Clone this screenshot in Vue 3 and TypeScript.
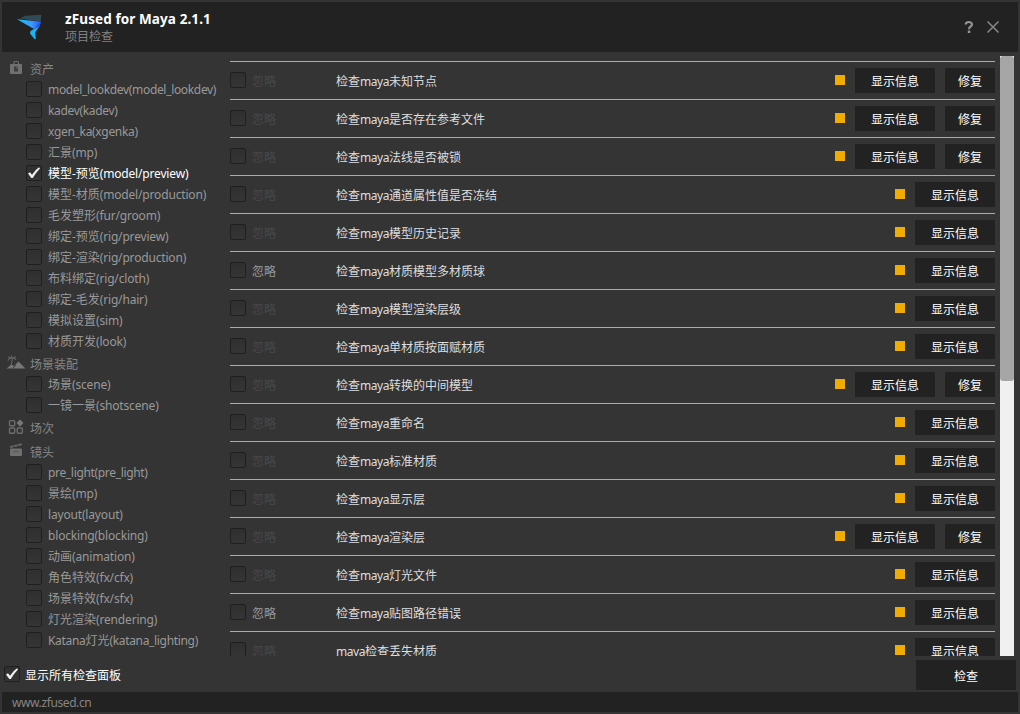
<script setup lang="ts">
interface Entry { label: string; checked?: boolean }
interface Group { name: string; icon: 'asset' | 'assembly' | 'sequence' | 'shot'; entries: Entry[] }
interface Check { label: string; repair?: boolean; ignorable?: boolean }

const list = (...labels: string[]): Entry[] => labels.map((label) => ({ label }))

// Splits a label into runs of Latin and Chinese text so each can be tracked separately.
const runs = (label: string) =>
  (label.match(/[\x20-\x7e]+|[^\x20-\x7e]+/g) ?? []).map((text) => ({
    text,
    kind: /[^\x20-\x7e]/.test(text) ? 'han' : /_|ka/i.test(text) ? 'latin tight' : 'latin',
  }))

const groups: Group[] = [
  {
    name: '资产',
    icon: 'asset',
    entries: [
      ...list('model_lookdev(model_lookdev)', 'kadev(kadev)', 'xgen_ka(xgenka)', '汇景(mp)'),
      { label: '模型-预览(model/preview)', checked: true },
      ...list('模型-材质(model/production)', '毛发塑形(fur/groom)', '绑定-预览(rig/preview)', '绑定-渲染(rig/production)',
        '布料绑定(rig/cloth)', '绑定-毛发(rig/hair)', '模拟设置(sim)', '材质开发(look)'),
    ],
  },
  { name: '场景装配', icon: 'assembly', entries: list('场景(scene)', '一镜一景(shotscene)') },
  { name: '场次', icon: 'sequence', entries: [] },
  {
    name: '镜头',
    icon: 'shot',
    entries: list('pre_light(pre_light)', '景绘(mp)', 'layout(layout)', 'blocking(blocking)', '动画(animation)',
      '角色特效(fx/cfx)', '场景特效(fx/sfx)', '灯光渲染(rendering)', 'Katana灯光(katana_lighting)'),
  },
]

const checks: Check[] = [
  { label: '检查maya未知节点', repair: true },
  { label: '检查maya是否存在参考文件', repair: true },
  { label: '检查maya法线是否被锁', repair: true },
  { label: '检查maya通道属性值是否冻结' },
  { label: '检查maya模型历史记录' },
  { label: '检查maya材质模型多材质球', ignorable: true },
  { label: '检查maya模型渲染层级' },
  { label: '检查maya单材质按面赋材质' },
  { label: '检查maya转换的中间模型', repair: true },
  { label: '检查maya重命名' },
  { label: '检查maya标准材质' },
  { label: '检查maya显示层' },
  { label: '检查maya渲染层', repair: true },
  { label: '检查maya灯光文件' },
  { label: '检查maya贴图路径错误', ignorable: true },
  { label: 'maya检查丢失材质' },
]
</script>

<template>
  <div class="window">
    <header class="titlebar">
      <svg class="logo" viewBox="0 0 28 28" width="28" height="28">
        <defs>
          <linearGradient id="wing" x1="0" y1="0" x2="1" y2="0">
            <stop offset="0" stop-color="#12c4f5" />
            <stop offset="0.6" stop-color="#3a9bff" />
            <stop offset="1" stop-color="#2a55f0" />
          </linearGradient>
        </defs>
        <path d="M3 5.500 8 2.800 24.500 1.800 23.500 8.800Z" fill="#304b56" />
        <path d="M0 6.300 24 8.800 22.500 13.500 17 16Z" fill="url(#wing)" />
        <path d="M13.500 18 22.500 13 18 19.500 18.800 26 17.500 26 13 20.500Z" fill="#17b7f7" />
        <path d="M17 16 24 8.800 22.500 13.200Z" fill="#2250dc" />
      </svg>
      <div class="titles">
        <h1>zFused for Maya 2.1.1</h1>
        <p>项目检查</p>
      </div>
      <div class="controls">
        <svg width="10" height="14" viewBox="0 0 10 14">
          <path d="M1.700 4.600C1.700 1.200 8 1.200 8 4.400 8 6.600 5 6.400 5 9.200" fill="none" stroke="#939393" stroke-width="2.200" />
          <rect x="3.800" y="10.500" width="2.500" height="2.500" fill="#939393" />
        </svg>
        <svg width="14" height="14" viewBox="0 0 14 14">
          <path d="M1.500 1.500 12.500 12.500M12.500 1.500 1.500 12.500" stroke="#888" stroke-width="1.500" />
        </svg>
      </div>
    </header>

    <main class="body">
      <nav class="sidebar">
        <section v-for="g in groups" :key="g.name" :class="['group', g.icon]">
          <div class="group-head">
            <svg class="group-icon" width="20" height="18" viewBox="0 0 20 18">
              <g v-if="g.icon === 'asset'">
                <path d="M8 5V3.500Q8 2.500 9 2.500h2.500q1 0 1 1V5" fill="none" stroke="#6b6b6b" stroke-width="1.200" />
                <rect x="4" y="5" width="12" height="10" rx="1" fill="#707070" />
                <rect x="8" y="7.500" width="4" height="5" fill="#3e3e3e" />
                <path d="M10 7.500h2v2h-2z" fill="#595959" />
              </g>
              <g v-else-if="g.icon === 'assembly'">
                <path d="M0.500 15.500 5.500 11.500 8 13 12.500 8.500 19.500 15.500Z" fill="#777" />
                <path d="M5.200 12 6.500 5.500M2 7.500Q4 4 6.500 5.500 8.500 4 10 7M2 4 6.500 5.500M5 2.500 6.500 5.500 9.500 3.500" fill="none" stroke="#666" stroke-width="1.100" />
                <path d="M6.500 15.500 9.800 12" stroke="#3a3a3a" />
              </g>
              <g v-else-if="g.icon === 'sequence'" fill="none" stroke="#6c6c6c" stroke-width="1.400">
                <rect x="3.500" y="2.600" width="5.200" height="5.200" rx="1" />
                <rect x="3.500" y="10" width="5.200" height="5.200" rx="1" />
                <rect x="11.200" y="10" width="5.200" height="5.200" rx="1" />
                <path d="M14 1.500 17.500 5 14 8.500 10.500 5Z" fill="#777" stroke="none" />
              </g>
              <g v-else>
                <path d="M3.800 5.200 15.500 2.200 16 4.300 4.300 7Z" fill="#666" />
                <path d="M7 4.300 8.500 6M11 3.300 12.500 5" stroke="#3e3e3e" />
                <rect x="4" y="7.500" width="12" height="7.500" rx="1" fill="#707070" />
                <path d="M7.500 10.500h5" stroke="#5c5c5c" stroke-width="1.500" />
              </g>
            </svg>
            <span class="group-name">{{ g.name }}</span>
          </div>
          <label v-for="e in g.entries" :key="e.label" :class="['entry', { on: e.checked }]">
            <span class="box">
              <svg v-if="e.checked" width="14" height="14" viewBox="0 0 14 14"><path d="M1 7.500 3 6.300 5 8.800Q8 4 12 1.300L13 2.400Q8.500 7 5.800 12H4.300Z" fill="#f0f0f0" /></svg>
            </span>
            <span><span v-for="(r, i) in runs(e.label)" :key="i" :class="r.kind">{{ r.text }}</span></span>
          </label>
        </section>
      </nav>

      <div class="checks">
        <div v-for="c in checks" :key="c.label" class="check">
          <span class="box"></span>
          <span :class="['ignore', { active: c.ignorable }]">忽略</span>
          <span class="name"><span v-for="(r, i) in runs(c.label)" :key="i" :class="r.kind">{{ r.text }}</span></span>
          <i class="status"></i>
          <button class="info">显示信息</button>
          <button v-if="c.repair" class="repair">修复</button>
        </div>
      </div>
      <div class="scrollbar"><div class="thumb"></div></div>
    </main>

    <div class="actions">
      <label class="show-all">
        <span class="box">
          <svg width="14" height="14" viewBox="0 0 14 14"><path d="M1 7.500 3 6.300 5 8.800Q8 4 12 1.300L13 2.400Q8.500 7 5.800 12H4.300Z" fill="#f0f0f0" /></svg>
        </span>
        <span class="show-all-text">显示所有检查面板</span>
      </label>
      <button class="run">检查</button>
    </div>
    <footer class="footer">www.zfused.cn</footer>
  </div>
</template>

<style>
body { margin: 0; background: #343434; }
</style>

<style scoped>
* { box-sizing: border-box; }
.window {
  width: 1020px;
  height: 714px;
  padding: 2px;
  display: flex;
  flex-direction: column;
  overflow: hidden;
  background: #343434;
  color: #999;
  font: 12px/16px "Noto Sans", "Noto Sans CJK SC", sans-serif;
  white-space: nowrap;
}
.latin { letter-spacing: -0.17px; }
.tight { letter-spacing: -0.33px; }
.name .latin { letter-spacing: -0.45px; }
.titlebar {
  height: 50px;
  flex: none;
  display: flex;
  align-items: center;
  padding: 0 18px 0 15px;
  background: #222;
}
.titles { margin-left: 20px; padding-top: 2px; flex: 1; }
h1 { margin: 0; font-size: 13.5px; line-height: 17px; font-weight: 700; letter-spacing: 0.1px; color: #fff; }
p { margin: 0; padding-top: 1px; line-height: 16px; color: #808080; }
.controls { display: flex; gap: 12px; }
.body {
  height: 604px;
  flex: none;
  display: flex;
}
.sidebar { width: 228px; padding-top: 5px; flex: none; }
.group-head { height: 22px; display: flex; align-items: center; padding-left: 4px; color: #858585; }
.group-icon { margin-right: 4px; }
.group-name { padding-top: 4px; }
.assembly .group-icon { margin-bottom: 2px; }
.sequence .group-head { height: 24px; }
.sequence .group-name { padding-top: 2px; }
.sequence .group-icon, .shot .group-icon { margin-bottom: 2px; }
.entry { height: 21px; display: flex; align-items: center; padding-left: 24px; gap: 6px; }
.entry.on { color: #fff; }
.box {
  width: 16px;
  height: 16px;
  flex: none;
  display: flex;
  margin-bottom: 2px;
  border: 1px solid #1f1f1f;
  border-radius: 2px;
  background: linear-gradient(#2f2f2f, #353535);
}
.checks { width: 765px; height: 604px; padding-top: 9px; overflow: hidden; }
.check {
  height: 38px;
  display: flex;
  align-items: center;
  border-top: 1px solid #eaaa0a;
}
.ignore { width: 84px; margin-left: 6px; padding-top: 2px; color: #484848; }
.ignore.active { color: #999; }
.name { flex: 1; padding-top: 2px; color: #dedede; }
.status { width: 10px; height: 10px; margin-bottom: 2px; background: #f0ac00; }
button {
  height: 25px;
  margin: 0 0 0 10px;
  padding: 3px 0 0;
  border: 0;
  background: #222;
  color: #fff;
  font: inherit;
}
.info { width: 80px; }
.repair { width: 50px; }
.scrollbar { width: 14px; height: 600px; margin: 4px 0 0 5px; background: #f0f0f0; }
.thumb { height: 325px; border-radius: 3px; background: #a6a6a6; }
.actions { height: 36px; flex: none; display: flex; align-items: center; justify-content: space-between; padding: 2px 2px 0; }
.show-all { display: flex; align-items: center; gap: 5px; color: #fff; }
.show-all-text { padding-top: 2px; }
.run { width: 100px; height: 30px; padding-top: 4px; }
.footer { height: 20px; flex: none; padding-left: 10px; line-height: 21px; letter-spacing: -0.4px; background: #222; color: #858585; }
</style>
